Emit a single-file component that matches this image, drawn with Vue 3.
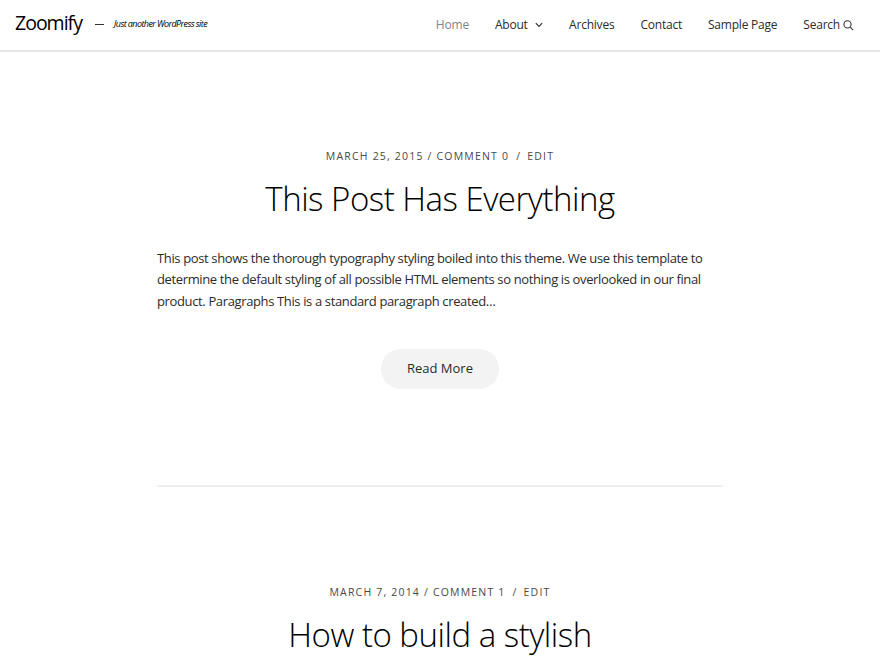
<script setup>
const menu = [
  { label: 'Home', active: true },
  { label: 'About', children: true },
  { label: 'Archives' },
  { label: 'Contact' },
  { label: 'Sample Page' },
]

const posts = [
  {
    date: 'March 25, 2015',
    comments: 0,
    title: 'This Post Has Everything',
    excerpt:
      'This post shows the thorough typography styling boiled into this theme. We use this template to determine the default styling of all possible HTML elements so nothing is overlooked in our final product. Paragraphs This is a standard paragraph created…',
  },
  { date: 'March 7, 2014', comments: 1, title: 'How to build a stylish' },
]
</script>

<template>
  <div class="page">
    <header class="header">
      <a class="brand">Zoomify</a>
      <span class="dash"></span>
      <em class="tagline">Just another WordPress site</em>
      <nav class="nav">
        <a v-for="item in menu" :key="item.label" class="link" :class="{ active: item.active }">
          {{ item.label }}
          <svg v-if="item.children" class="chevron" viewBox="0 0 8 6" width="8" height="6">
            <path d="M0.8 1.2 L4 4.4 L7.2 1.2" />
          </svg>
        </a>
        <a class="link search">
          Search
          <svg class="glass" viewBox="0 0 11 11" width="11" height="11">
            <circle cx="4.5" cy="4.4" r="3.6" />
            <path d="M7.2 7.1 L10.2 10.1" />
          </svg>
        </a>
      </nav>
    </header>

    <main class="content">
      <article v-for="post in posts" :key="post.title" class="post">
        <div class="meta">
          <span>{{ post.date }} / Comment {{ post.comments }}</span>
          <span class="slash">/</span>
          <span>Edit</span>
        </div>
        <h2 class="title">{{ post.title }}</h2>
        <template v-if="post.excerpt">
          <p class="excerpt">{{ post.excerpt }}</p>
          <a class="more">Read More</a>
        </template>
      </article>
    </main>
  </div>
</template>

<style>
body {
  background: #fff;
}
</style>

<style scoped>
.page {
  height: 660px;
  overflow: hidden;
  font-family: 'Open Sans', 'Noto Sans', sans-serif;
  color: #2b2b2b;
}
.header {
  display: flex;
  align-items: center;
  box-sizing: border-box;
  height: 52px;
  padding: 0 26px 2px 15px;
  border-bottom: 2px solid #e6e6e6;
}
.brand {
  width: 80px;
  font-size: 19.5px;
  line-height: 28px;
  letter-spacing: -1px;
  color: #000;
  padding-bottom: 3px;
}
.dash {
  width: 9px;
  height: 1px;
  margin-right: 10px;
  background: #333;
}
.tagline {
  font-size: 9px;
  letter-spacing: -0.59px;
  white-space: nowrap;
  color: #000;
  padding-bottom: 2px;
}
.nav {
  display: flex;
  align-items: center;
  gap: 26px;
  margin-left: auto;
  padding-top: 2px;
}
.link {
  display: flex;
  align-items: center;
  font-size: 12px;
  line-height: 20px;
  letter-spacing: -0.22px;
  white-space: nowrap;
}
.active {
  color: #7f8488;
}
svg {
  fill: none;
  stroke: #333;
}
.chevron {
  margin-left: 7.5px;
  stroke-width: 1.2;
}
.glass {
  margin-left: 3px;
  stroke-width: 1.1;
}
.content {
  width: 566px;
  margin: 0 auto;
}
.post {
  display: flex;
  flex-direction: column;
  align-items: center;
  padding-top: 96px;
}
.post:first-child {
  height: 337px;
  border-bottom: 2px solid #eee;
}
.post + .post {
  padding-top: 97px;
}
.meta {
  display: flex;
  font-size: 10.5px;
  font-weight: 400;
  line-height: 16px;
  letter-spacing: 1.19px;
  text-transform: uppercase;
  white-space: nowrap;
  color: #484848;
}
.slash {
  margin: 0 6px 0 7px;
}
.title {
  margin: 13px 0 0;
  font-size: 33px;
  font-weight: 300;
  line-height: 44px;
  letter-spacing: -0.49px;
  white-space: nowrap;
  color: #000;
}
.excerpt {
  width: 100%;
  margin: 27px 0 0;
  font-size: 13px;
  line-height: 21.3px;
  letter-spacing: -0.365px;
}
.more {
  margin-top: 37px;
  width: 118px;
  height: 40px;
  border-radius: 20px;
  background: #f3f3f3;
  font-size: 13px;
  line-height: 39px;
  text-align: center;
}
</style>
